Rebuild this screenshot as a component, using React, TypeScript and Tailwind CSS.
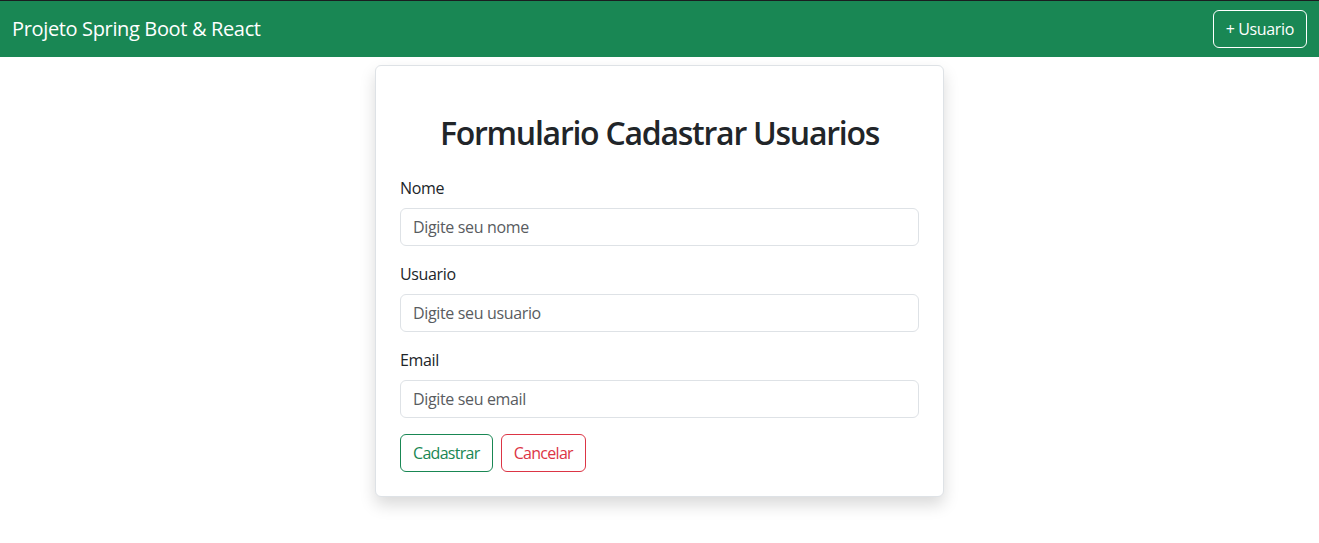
import { useState } from "react";

const fields = [
  { id: "nome", label: "Nome", placeholder: "Digite seu nome" },
  { id: "usuario", label: "Usuario", placeholder: "Digite seu usuario" },
  { id: "email", label: "Email", placeholder: "Digite seu email" },
];

export default function App() {
  const [values, setValues] = useState<Record<string, string>>({});

  return (
    <div className="min-h-[543px] bg-white text-[#212529] font-['Open_Sans',sans-serif] tracking-[-0.35px]">
      <nav className="flex h-[57px] items-center justify-between border-t border-[#1a1d20] bg-[#198754] px-3">
        <span className="text-[20px] text-white">Projeto Spring Boot &amp; React</span>
        <button
          type="button"
          className="h-[38px] rounded-md border border-white px-3 text-base text-white"
        >
          + Usuario
        </button>
      </nav>

      <div className="flex justify-center pt-2">
        <form
          className="w-[569px] rounded-md border border-[#dee2e6] bg-white p-6 shadow-[0_8px_16px_rgba(0,0,0,0.15)]"
          onSubmit={(e) => e.preventDefault()}
        >
          <h2 className="m-6 text-center text-[32px] font-semibold leading-[38px] tracking-[-1.25px]">
            Formulario Cadastrar Usuarios
          </h2>

          {fields.map((f) => (
            <div key={f.id} className="mb-4">
              <label htmlFor={f.id} className="mb-2 block text-base leading-6">
                {f.label}
              </label>
              <input
                id={f.id}
                type="text"
                placeholder={f.placeholder}
                value={values[f.id] ?? ""}
                onChange={(e) => setValues({ ...values, [f.id]: e.target.value })}
                className="block h-[38px] w-full rounded-md border border-[#dee2e6] px-3 text-base placeholder:text-[#595c5f] focus:outline-none"
              />
            </div>
          ))}

          <div className="flex gap-2">
            <button
              type="submit"
              className="h-[38px] rounded-md border border-[#198754] px-3 text-base tracking-[-0.7px] text-[#198754]"
            >
              Cadastrar
            </button>
            <button
              type="button"
              className="h-[38px] rounded-md border border-[#dc3545] px-3 text-base tracking-[-0.7px] text-[#dc3545]"
            >
              Cancelar
            </button>
          </div>
        </form>
      </div>
    </div>
  );
}
